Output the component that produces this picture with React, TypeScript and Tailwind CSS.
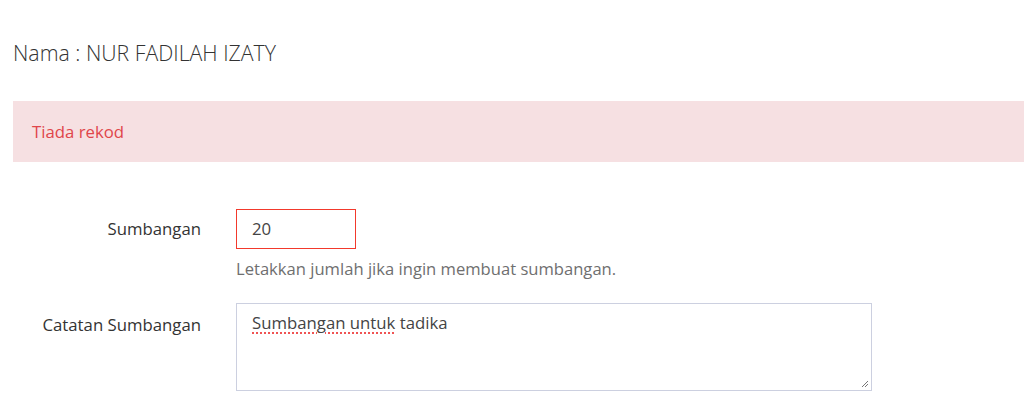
import React from "react";

export default function App() {
  return (
    <div className="w-[1024px] h-[406px] overflow-hidden bg-white font-['Open_Sans',sans-serif] text-[#333]">
      <div className="pl-[13px] pt-[38px]">
        <h1 className="text-[21.3px] font-light leading-[30px] text-[#333]">Nama : NUR FADILAH IZATY</h1>
        <div className="mt-[33px] h-[61px] bg-[#f6e0e2] pl-[19px] flex items-center text-[16.75px] text-[#e0464b] w-[1020px]">
          Tiada rekod
        </div>
        <div className="mt-[47px] flex flex-col gap-[22px]">
          <div className="flex">
            <div className="w-[188px] text-right text-[16.75px] pt-[8px] leading-[24px]">Sumbangan</div>
            <div className="ml-[35px] flex flex-col">
              <div className="w-[120px] h-[40px] border border-[#f2392c] flex items-center pl-[15px] text-[16.75px] text-[#444]">20</div>
              <div className="mt-[8px] text-[16.6px] text-[#6f6f6f] leading-[24px]">Letakkan jumlah jika ingin membuat sumbangan.</div>
            </div>
          </div>
          <div className="flex">
            <div className="w-[188px] text-right text-[16.75px] pt-[10px] leading-[24px]">Catatan Sumbangan</div>
            <div className="ml-[35px] relative w-[636px] h-[88px] border border-[#ccd0e0] pl-[15px] pt-[7px] text-[16.75px] text-[#444] leading-[24px]">
              <span className="underline decoration-dotted decoration-[#e33] underline-offset-[4px]">Sumbangan untuk</span> tadika
              <svg className="absolute right-[2px] bottom-[2px]" width="9" height="9" viewBox="0 0 9 9">
                <path d="M8 2 L2 8 M8 5 L5 8" stroke="#777" strokeWidth="1" />
              </svg>
            </div>
          </div>
        </div>
      </div>
    </div>
  );
}
